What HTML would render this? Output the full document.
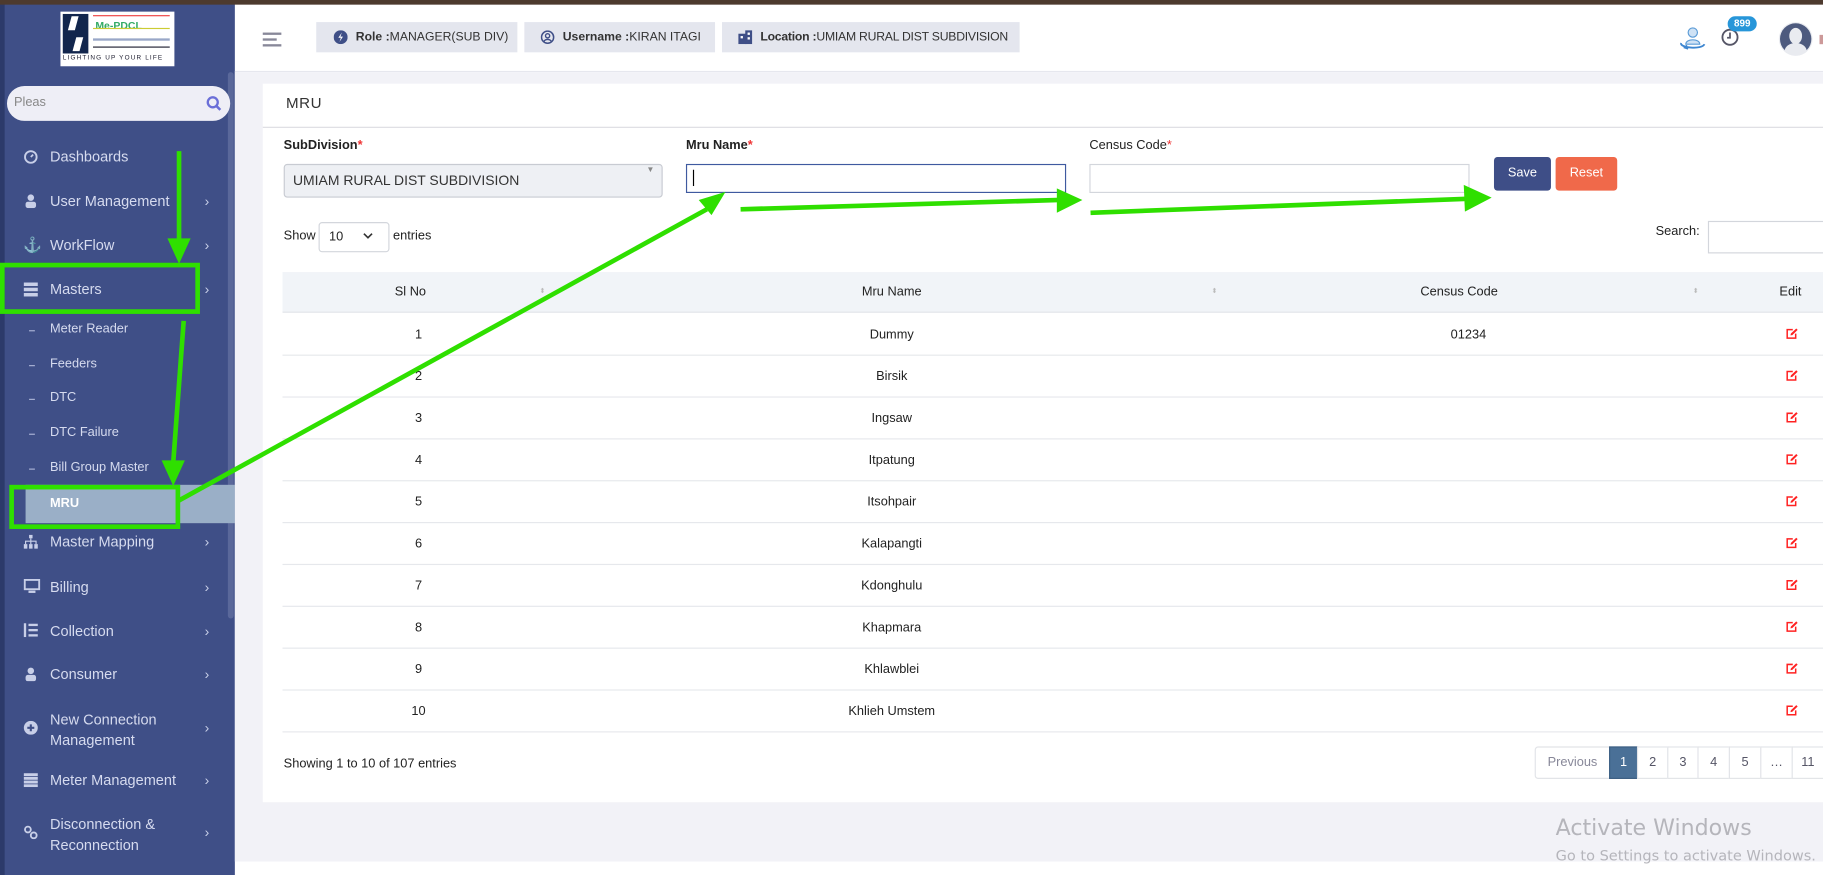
<!DOCTYPE html>
<html><head><meta charset="utf-8"><style>
*{box-sizing:border-box;margin:0;padding:0}
html,body{width:1823px;height:875px;overflow:hidden;background:#fff;font-family:"Liberation Sans",sans-serif}
#w{position:absolute;left:0;top:0;width:1568px;height:753px;transform:scale(1.16263);transform-origin:0 0;background:#fff}
.a{position:absolute}
#side{left:0;top:0;width:202px;height:753px;background:#3f4f87}
.mi{position:absolute;left:43px;color:#d6dbef;font-size:12.5px}
.ic{position:absolute;left:20px;width:13px;height:12px;color:#c8cfe8}
.ch{position:absolute;left:176px;color:#c8cfe8;font-size:12px}
.sub{position:absolute;left:43px;color:#d6dbef;font-size:11px}
.dash{position:absolute;left:25px;width:5px;height:1px;background:#aab3d6}
.pill{position:absolute;top:19px;height:26px;background:#e4e6ee;font-size:10.5px;color:#333;line-height:26px;padding-left:14px;white-space:nowrap;overflow:hidden}
.pill b{color:#333}
.lbl{position:absolute;top:119px;font-size:11px;font-weight:bold;color:#222}
.lbl i{color:#e33;font-style:normal}
.row{position:absolute;left:243px;width:1325px;height:36px;border-bottom:1px solid #e6e8ec;font-size:11px;color:#222}
.row span{position:absolute;top:12px;transform:translateX(-50%)}
.ed{position:absolute;top:12px;width:11px;height:10px}
.pg{position:absolute;top:642px;height:28px;border:1px solid #e2e4e8;font-size:11px;color:#556;line-height:26px;text-align:center;background:#fff}
</style></head><body><div id="w">
<svg width="0" height="0" style="position:absolute"><defs><symbol id="pen" viewBox="0 0 11 10"><path d="M6 1.5H1.2v7.3h7.3V5" fill="none" stroke="#f22" stroke-width="1.3"/><path d="M4 6.5l.4-1.6L9 .5l1.2 1.2-4.6 4.5z" fill="#f22"/></symbol></defs></svg>
<div class="a" style="left:0;top:0;width:1568px;height:4px;background:#4d3a2e;z-index:5"></div>
<div class="a" id="side"></div>
<div class="a" style="left:0;top:0;width:4px;height:753px;background:#2c3a6a"></div>
<div class="a" style="left:196px;top:62px;width:5px;height:470px;background:#5a689a;border-radius:3px"></div>
<div class="a" style="left:52px;top:10px;width:98px;height:47px;background:#fff">
 <div class="a" style="left:2px;top:2px;width:22px;height:34px;background:#12264d"></div>
 <div class="a" style="left:8px;top:4px;width:6px;height:12px;background:#fff;transform:skewX(-15deg)"></div>
 <div class="a" style="left:12px;top:22px;width:6px;height:12px;background:#fff;transform:skewX(-15deg)"></div>
 <div class="a" style="left:28px;top:3px;width:66px;height:1px;background:#e44"></div>
 <div class="a" style="left:30px;top:7px;font-size:9px;font-weight:bold;color:#3a6;">Me-PDCL</div>
 <div class="a" style="left:28px;top:14px;width:66px;height:1px;background:#cc3"></div>
 <div class="a" style="left:28px;top:23px;width:66px;height:2px;background:#99a7c8"></div>
 <div class="a" style="left:28px;top:30px;width:66px;height:1px;background:#223"></div>
 <div class="a" style="left:2px;top:37px;font-size:5.5px;letter-spacing:1px;color:#223">LIGHTING UP YOUR LIFE</div>
</div>
<div class="a" style="left:6px;top:74px;width:192px;height:30px;background:#eeeef6;border-radius:15px"></div>
<div class="a" style="left:12px;top:82px;font-size:11px;color:#888">Pleas</div>
<svg class="a" style="left:177px;top:82px" width="14" height="14" viewBox="0 0 14 14"><circle cx="6" cy="6" r="4.3" fill="none" stroke="#6b6fd8" stroke-width="2"/><path d="M9 9l3.5 3.5" stroke="#6b6fd8" stroke-width="2.2"/></svg>

<svg class="ic" style="top:129px" viewBox="0 0 12 12"><circle cx="6" cy="6" r="5" fill="none" stroke="#c8cfe8" stroke-width="1.6"/><path d="M6 6l2-2" stroke="#c8cfe8" stroke-width="1.5"/></svg><div class="mi" style="top:128px">Dashboards</div>
<svg class="ic" style="top:167px" viewBox="0 0 12 12"><circle cx="6" cy="3" r="2.8" fill="#c8cfe8"/><rect x="1.5" y="6.5" width="9" height="5.5" rx="2" fill="#c8cfe8"/></svg><div class="mi" style="top:166px">User Management</div><div class="ch" style="top:166px">›</div>
<div class="ic" style="top:203px;font-size:13px">⚓</div><div class="mi" style="top:204px">WorkFlow</div><div class="ch" style="top:204px">›</div>
<svg class="ic" style="top:243px" viewBox="0 0 12 12"><rect x="0" y="0" width="12" height="3" fill="#c8cfe8"/><rect x="0" y="4.5" width="12" height="3" fill="#c8cfe8"/><rect x="0" y="9" width="12" height="3" fill="#c8cfe8"/></svg><div class="mi" style="top:242px">Masters</div><div class="ch" style="top:242px">›</div>
<div class="dash" style="top:284px"></div><div class="sub" style="top:277px">Meter Reader</div>
<div class="dash" style="top:314px"></div><div class="sub" style="top:307px">Feeders</div>
<div class="dash" style="top:343px"></div><div class="sub" style="top:336px">DTC</div>
<div class="dash" style="top:373px"></div><div class="sub" style="top:366px">DTC Failure</div>
<div class="dash" style="top:403px"></div><div class="sub" style="top:396px">Bill Group Master</div>
<div class="a" style="left:22px;top:417px;width:180px;height:33px;background:#9aafc7"></div>
<div class="sub" style="top:427px;color:#fff;font-weight:bold">MRU</div>
<svg class="ic" style="top:460px" viewBox="0 0 12 12"><rect x="4.5" y="0" width="3" height="3" fill="#c8cfe8"/><rect x="0" y="8" width="3" height="4" fill="#c8cfe8"/><rect x="4.5" y="8" width="3" height="4" fill="#c8cfe8"/><rect x="9" y="8" width="3" height="4" fill="#c8cfe8"/><path d="M6 3v5M1.5 8V5.5h9V8" stroke="#c8cfe8" fill="none"/></svg><div class="mi" style="top:459px">Master Mapping</div><div class="ch" style="top:459px">›</div>
<svg class="ic" style="top:498px;width:15px" viewBox="0 0 14 12"><rect x="0.8" y="0.8" width="12.4" height="8" fill="none" stroke="#c8cfe8" stroke-width="1.6"/><rect x="4" y="10" width="6" height="2" fill="#c8cfe8"/></svg><div class="mi" style="top:498px">Billing</div><div class="ch" style="top:498px">›</div>
<svg class="ic" style="top:536px" viewBox="0 0 12 12"><rect x="4" y="0.5" width="8" height="2" fill="#c8cfe8"/><rect x="4" y="5" width="8" height="2" fill="#c8cfe8"/><rect x="4" y="9.5" width="8" height="2" fill="#c8cfe8"/><rect x="0" y="0" width="2" height="12" fill="#c8cfe8"/></svg><div class="mi" style="top:536px">Collection</div><div class="ch" style="top:536px">›</div>
<svg class="ic" style="top:574px" viewBox="0 0 12 12"><circle cx="6" cy="3" r="2.8" fill="#c8cfe8"/><rect x="1.5" y="6.5" width="9" height="5.5" rx="2" fill="#c8cfe8"/></svg><div class="mi" style="top:573px">Consumer</div><div class="ch" style="top:573px">›</div>
<svg class="ic" style="top:620px" viewBox="0 0 12 12"><circle cx="6" cy="6" r="6" fill="#c8cfe8"/><path d="M6 3v6M3 6h6" stroke="#3f4f87" stroke-width="1.8"/></svg><div class="mi" style="top:610px;line-height:18px">New Connection<br>Management</div><div class="ch" style="top:619px">›</div>
<svg class="ic" style="top:665px" viewBox="0 0 12 12"><rect x="0" y="0" width="12" height="2.5" fill="#c8cfe8"/><rect x="0" y="3.2" width="12" height="2.5" fill="#c8cfe8"/><rect x="0" y="6.4" width="12" height="2.5" fill="#c8cfe8"/><rect x="0" y="9.6" width="12" height="2.4" fill="#c8cfe8"/></svg><div class="mi" style="top:664px">Meter Management</div><div class="ch" style="top:664px">›</div>
<svg class="ic" style="top:710px" viewBox="0 0 12 12"><circle cx="3.5" cy="3.5" r="2.5" fill="none" stroke="#c8cfe8" stroke-width="1.6"/><circle cx="8.5" cy="8.5" r="2.5" fill="none" stroke="#c8cfe8" stroke-width="1.6"/></svg><div class="mi" style="top:700px;line-height:18px">Disconnection &amp;<br>Reconnection</div><div class="ch" style="top:709px">›</div>

<!-- header -->
<div class="a" style="left:202px;top:61px;width:1366px;height:1px;background:#e6e7ee"></div>
<div class="a" style="left:226px;top:28px;width:16px;height:1.5px;background:#889"></div>
<div class="a" style="left:226px;top:33px;width:12px;height:1.5px;background:#889"></div>
<div class="a" style="left:226px;top:38px;width:16px;height:1.5px;background:#889"></div>
<div class="pill" style="left:272px;width:173px;padding-left:34px"><svg class="a" style="left:15px;top:7px" width="12" height="12" viewBox="0 0 12 12"><circle cx="6" cy="6" r="6" fill="#3f4f87"/><path d="M7 2L4 6.5h2.2L5 10l3-4.5H5.8z" fill="#fff"/></svg><b>Role :</b>MANAGER(SUB DIV)</div>
<div class="pill" style="left:451px;width:164px;padding-left:33px"><svg class="a" style="left:14px;top:7px" width="12" height="12" viewBox="0 0 12 12"><circle cx="6" cy="6" r="5.2" fill="none" stroke="#3f4f87" stroke-width="1.3"/><circle cx="6" cy="4.8" r="1.8" fill="none" stroke="#3f4f87" stroke-width="1.2"/><path d="M2.8 9.6c1.5-2.2 4.9-2.2 6.4 0" fill="none" stroke="#3f4f87" stroke-width="1.2"/></svg><b>Username :</b>KIRAN ITAGI</div>
<div class="pill" style="left:621px;width:256px;padding-left:33px;letter-spacing:-0.2px"><svg class="a" style="left:14px;top:7px" width="12" height="12" viewBox="0 0 12 12"><rect x="0" y="3" width="7" height="9" fill="#3f4f87"/><rect x="6" y="0" width="6" height="12" fill="#3f4f87"/><rect x="2" y="5" width="2" height="2" fill="#fff"/><rect x="8" y="2" width="2" height="2" fill="#fff"/><rect x="8" y="6" width="2" height="2" fill="#fff"/></svg><b>Location :</b>UMIAM RURAL DIST SUBDIVISION</div>
<svg class="a" style="left:1443px;top:22px" width="26" height="24" viewBox="0 0 26 24"><circle cx="13" cy="6" r="4" fill="#cfe2f5" stroke="#5b9bd6"/><path d="M7 16c0-5 12-5 12 0z" fill="#cfe2f5" stroke="#5b9bd6"/><path d="M3 15c-2 4 18 6 20 1" fill="none" stroke="#3d86d0" stroke-width="1.6"/><path d="M9 20l-3-1 2-2" fill="none" stroke="#3d86d0" stroke-width="1.4"/></svg>
<svg class="a" style="left:1480px;top:24px" width="16" height="16" viewBox="0 0 16 16"><circle cx="8" cy="8" r="6.5" fill="none" stroke="#556" stroke-width="1.6"/><path d="M8 4v4.5H5.5" fill="none" stroke="#556" stroke-width="1.5"/></svg>
<div class="a" style="left:1486px;top:14px;width:25px;height:13px;border-radius:7px;background:#2796d9;color:#fff;font-size:8.5px;font-weight:bold;text-align:center;line-height:13px">899</div>
<div class="a" style="left:1530px;top:19px;width:29px;height:29px;border-radius:50%;background:#e9ebf0;overflow:hidden"><div class="a" style="left:1px;top:1px;width:27px;height:27px;border-radius:50%;background:#4d5a7e"></div><div class="a" style="left:9px;top:5px;width:11px;height:14px;border-radius:50%;background:#e9ebf0"></div><div class="a" style="left:5px;top:18px;width:19px;height:14px;border-radius:50%;background:#e9ebf0"></div></div>
<div class="a" style="left:1565px;top:30px;width:3px;height:8px;background:#c99"></div>

<!-- content -->
<div class="a" style="left:202px;top:62px;width:1366px;height:679px;background:#f2f2f7"></div>
<div class="a" style="left:226px;top:72px;width:1342px;height:618px;background:#fff"></div>
<div class="a" style="left:246px;top:81px;font-size:13px;color:#333;letter-spacing:0.5px">MRU</div>
<div class="a" style="left:226px;top:109px;width:1342px;height:1px;background:#dcdde2"></div>
<div class="lbl" style="left:244px">SubDivision<i>*</i></div>
<div class="lbl" style="left:590px">Mru Name<i>*</i></div>
<div class="lbl" style="left:937px;font-weight:normal">Census Code<i>*</i></div>
<div class="a" style="left:244px;top:141px;width:326px;height:29px;background:#eef0f4;border:1px solid #c8cbd2;border-radius:3px;font-size:12px;color:#333;line-height:27px;padding-left:7px">UMIAM RURAL DIST SUBDIVISION</div>
<div class="a" style="left:556px;top:143px;font-size:7px;color:#888">▼</div>
<div class="a" style="left:590px;top:141px;width:327px;height:25px;border:1px solid #3f5aa0"></div>
<div class="a" style="left:596px;top:146px;width:1px;height:14px;background:#000"></div>
<div class="a" style="left:937px;top:141px;width:327px;height:25px;border:1px solid #d3d6dc"></div>
<div class="a" style="left:1285px;top:135px;width:49px;height:29px;background:#3e4e87;border-radius:3px;color:#fff;font-size:11px;text-align:center;line-height:29px">Save</div>
<div class="a" style="left:1338px;top:135px;width:53px;height:29px;background:#f0694a;border-radius:3px;color:#fff;font-size:11px;text-align:center;line-height:29px">Reset</div>
<div class="a" style="left:244px;top:197px;font-size:11px;color:#222">Show</div>
<div class="a" style="left:274px;top:191px;width:61px;height:26px;border:1px solid #d3d6dc;border-radius:3px;font-size:11px;line-height:24px;padding-left:8px;color:#222">10</div>
<svg class="a" style="left:312px;top:200px" width="9" height="6" viewBox="0 0 9 6"><path d="M1 1l3.5 3.5L8 1" fill="none" stroke="#333" stroke-width="1.4"/></svg>
<div class="a" style="left:338px;top:197px;font-size:11px;color:#222">entries</div>
<div class="a" style="left:1424px;top:193px;font-size:11px;color:#222">Search:</div>
<div class="a" style="left:1469px;top:190px;width:110px;height:28px;border:1px solid #d3d6dc"></div>

<div class="a" style="left:243px;top:234px;width:1325px;height:35px;background:#f1f4f8;border-bottom:1px solid #e3e5ea;font-size:11px;color:#222">
<span class="a" style="left:110px;top:11px;transform:translateX(-50%)">Sl No</span>
<span class="a" style="left:524px;top:11px;transform:translateX(-50%)">Mru Name</span>
<span class="a" style="left:1012px;top:11px;transform:translateX(-50%)">Census Code</span>
<span class="a" style="left:1297px;top:11px;transform:translateX(-50%)">Edit</span>
<span class="a" style="left:221px;top:13px;font-size:6px;color:#bbb">⬍</span>
<span class="a" style="left:799px;top:13px;font-size:6px;color:#bbb">⬍</span>
<span class="a" style="left:1213px;top:13px;font-size:6px;color:#bbb">⬍</span>
</div>
<div class="row" style="top:270px"><span style="left:117px">1</span><span style="left:524px">Dummy</span><span style="left:1020px">01234</span><svg class="ed" style="left:1293px"><use href="#pen"/></svg></div>
<div class="row" style="top:306px"><span style="left:117px">2</span><span style="left:524px">Birsik</span><svg class="ed" style="left:1293px"><use href="#pen"/></svg></div>
<div class="row" style="top:342px"><span style="left:117px">3</span><span style="left:524px">Ingsaw</span><svg class="ed" style="left:1293px"><use href="#pen"/></svg></div>
<div class="row" style="top:378px"><span style="left:117px">4</span><span style="left:524px">Itpatung</span><svg class="ed" style="left:1293px"><use href="#pen"/></svg></div>
<div class="row" style="top:414px"><span style="left:117px">5</span><span style="left:524px">Itsohpair</span><svg class="ed" style="left:1293px"><use href="#pen"/></svg></div>
<div class="row" style="top:450px"><span style="left:117px">6</span><span style="left:524px">Kalapangti</span><svg class="ed" style="left:1293px"><use href="#pen"/></svg></div>
<div class="row" style="top:486px"><span style="left:117px">7</span><span style="left:524px">Kdonghulu</span><svg class="ed" style="left:1293px"><use href="#pen"/></svg></div>
<div class="row" style="top:522px"><span style="left:117px">8</span><span style="left:524px">Khapmara</span><svg class="ed" style="left:1293px"><use href="#pen"/></svg></div>
<div class="row" style="top:558px"><span style="left:117px">9</span><span style="left:524px">Khlawblei</span><svg class="ed" style="left:1293px"><use href="#pen"/></svg></div>
<div class="row" style="top:594px"><span style="left:117px">10</span><span style="left:524px">Khlieh Umstem</span><svg class="ed" style="left:1293px"><use href="#pen"/></svg></div>
<div class="a" style="left:244px;top:651px;font-size:11px;color:#222">Showing 1 to 10 of 107 entries</div>
<div class="pg" style="left:1320px;width:65px;border-radius:3px 0 0 3px;color:#889">Previous</div>
<div class="pg" style="left:1384px;width:25px;background:#4a7097;border-color:#3d5f83;color:#fff">1</div>
<div class="pg" style="left:1408px;width:27px">2</div>
<div class="pg" style="left:1434px;width:27px">3</div>
<div class="pg" style="left:1460px;width:28px">4</div>
<div class="pg" style="left:1487px;width:28px">5</div>
<div class="pg" style="left:1514px;width:28px">…</div>
<div class="pg" style="left:1541px;width:28px">11</div>
<div class="a" style="left:1338px;top:701px;font-size:19px;color:#b5b5bb;font-family:'DejaVu Sans',sans-serif">Activate Windows</div>
<div class="a" style="left:1338px;top:728px;font-size:12.5px;color:#b5b5bb;font-family:'DejaVu Sans',sans-serif;white-space:nowrap">Go to Settings to activate Windows.</div>

<svg class="a" style="left:0;top:0;z-index:10" width="1568" height="753">
<g stroke="#2fdf00" fill="none" stroke-width="4">
<rect x="2" y="228" width="168" height="40"/>
<rect x="10" y="419" width="143" height="34"/>
<path d="M154 130V210"/>
<path d="M158 276L149 398"/>
<path d="M153 431L608 180"/>
<path d="M637 180L912 172"/>
<path d="M938 183L1262 171"/>
</g>
<g fill="#2fdf00">
<path d="M144 205h20l-10 22z"/>
<path d="M139 396h20l-10 22z"/>
<path d="M601 172l23-7-12 20z"/>
<path d="M909 162l22 10-22 11z"/>
<path d="M1259 159l24 11-23 12z"/>
</g>
</svg>
</div></body></html>
